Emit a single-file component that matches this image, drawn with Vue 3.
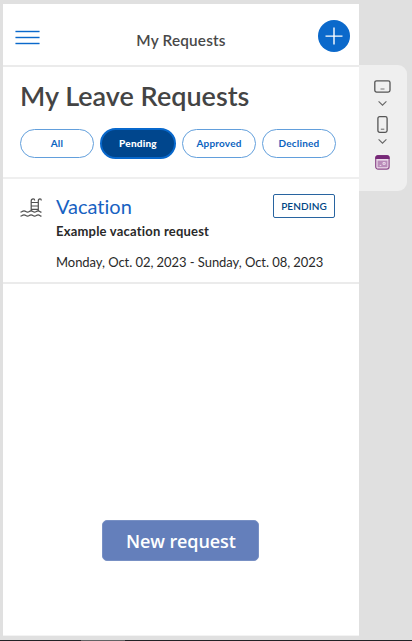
<script setup>
const filters = [
  { label: 'All' },
  { label: 'Pending', active: true },
  { label: 'Approved' },
  { label: 'Declined' },
]
</script>

<template>
  <div class="workspace">
    <main class="phone">
      <header class="topbar">
        <svg class="menu" width="25" height="16" viewBox="0 0 25 16">
          <path d="M.5 1.5h24M.5 7.5h24M.5 13.5h24" fill="none" stroke="#b9d5f1" stroke-width="2.4" />
          <path d="M.5 1.5h24M.5 7.5h24M.5 13.5h24" fill="none" stroke="#0b69cb" stroke-width="1" />
        </svg>
        <span class="screen-name">My Requests</span>
        <button class="add" aria-label="Add">
          <svg width="18" height="18" viewBox="0 0 18 18">
            <path d="M.5 9.1h17M9 .5v17" stroke="#fff" stroke-width="1.4" />
          </svg>
        </button>
      </header>

      <section class="intro">
        <h1>My Leave Requests</h1>
        <nav class="filters">
          <button v-for="f in filters" :key="f.label" class="pill" :class="{ active: f.active }">{{ f.label }}</button>
        </nav>
      </section>

      <article class="request">
        <svg class="pool" width="22" height="20" viewBox="0 0 22 20" fill="none" stroke="#505050" stroke-width="1.2">
          <path d="M11.2 13V3Q11.2.9 13.2.9 14.7.9 14.7 2.4M18.3 13V3Q18.3.9 20 .9 21.3.9 21.3 2.4M11.2 4.5h7M11.2 8h7M11.2 11.3h7" />
          <path d="M.5 14.2C2.2 14.2 2.2 12.8 4 12.8S5.9 14.2 7.6 14.2 9.3 12.8 11.1 12.8 12.9 14.2 14.6 14.2 16.4 12.8 18.1 12.8 19.8 14.2 21.5 14.2M.5 18.2C2.2 18.2 2.2 16.8 4 16.8S5.9 18.2 7.6 18.2 9.3 16.8 11.1 16.8 12.9 18.2 14.6 18.2 16.4 16.8 18.1 16.8 19.8 18.2 21.5 18.2" />
        </svg>
        <div class="details">
          <div class="heading">
            <h2>Vacation</h2>
            <span class="status">PENDING</span>
          </div>
          <p class="summary">Example vacation request</p>
          <p class="dates">Monday, Oct. 02, 2023 - Sunday, Oct. 08, 2023</p>
        </div>
      </article>

      <button class="new-request">New request</button>
    </main>

    <aside class="devices">
      <svg width="17" height="13" viewBox="0 0 17 13" fill="none">
        <rect x=".8" y=".8" width="15.2" height="11.3" rx="1.8" stroke="#555" stroke-width="1.3" />
        <path d="M6.5 9h4" stroke="#777" />
      </svg>
      <svg class="chevron" width="9" height="5" viewBox="0 0 9 5" fill="none">
        <path d="M.6.4 4.5 4.2 8.4.4" stroke="#666" stroke-width="1.1" />
      </svg>
      <svg class="handset" width="11" height="17" viewBox="0 0 11 17" fill="none">
        <rect x=".9" y=".7" width="9.2" height="15.6" rx="1.8" stroke="#555" stroke-width="1.3" />
        <path d="M3.8 13.2h3.5" stroke="#666" />
      </svg>
      <svg class="chevron" width="9" height="5" viewBox="0 0 9 5" fill="none">
        <path d="M.6.4 4.5 4.2 8.4.4" stroke="#666" stroke-width="1.1" />
      </svg>
      <svg class="app" width="15" height="15" viewBox="0 0 15 15" fill="none">
        <rect x=".7" y=".7" width="13.4" height="13.4" rx="2.4" fill="#ead9e9" stroke="#8d4b8b" stroke-width="1.2" />
        <path d="M.3 4V3Q.3.2 3 .2h9Q14.6.2 14.6 3v1Z" fill="#762877" />
        <path d="M2.6 5.6h9.8v6.6H2.6Z" fill="#b98bb9" />
        <path d="M8 7.6h2.2v1.7H8ZM4.7 10.4h1.6" stroke="#f0e2ef" stroke-width=".9" />
      </svg>
    </aside>
    <footer class="edge"><span></span></footer>
  </div>
</template>

<style>
body { margin: 0; background: #e0e0e0; }
</style>

<style scoped>
* { box-sizing: border-box; }
button { padding: 0; border: 0; }
h1, h2, p { margin: 0; }
svg { display: block; flex: none; }
.workspace {
  width: 412px;
  height: 641px;
  padding: 4px 0 0 3px;
  background: #e0e0e0;
  display: grid;
  grid-template-columns: 356px 48px;
  grid-template-rows: 632px 5px;
  align-items: start;
  font-family: Lato, sans-serif;
  font-variant-ligatures: none;
  overflow: hidden;
}
.phone {
  height: 632px;
  background: #fff;
  display: flex;
  flex-direction: column;
  border-bottom: 1px solid #f3f3f3;
}
.topbar {
  height: 63px;
  border-bottom: 2px solid #ebebeb;
  display: grid;
  grid-template-columns: 60px 1fr 60px;
  align-items: start;
}
.menu { margin: 26px 0 0 12px; }
.screen-name {
  margin-top: 26px;
  text-align: center;
  font-size: 15.3px;
  line-height: 20px;
  font-weight: 600;
  letter-spacing: .2px;
  color: #484848;
}
.add {
  width: 32px;
  height: 32px;
  margin: 16px 0 0 19px;
  border-radius: 50%;
  background: #0b69cb;
  display: flex;
  align-items: center;
  justify-content: center;
}
.intro {
  height: 112px;
  border-bottom: 2px solid #efefef;
  padding: 11px 0 0 17px;
}
h1 {
  font-size: 27px;
  line-height: 36px;
  font-weight: 600;
  color: #444;
  white-space: nowrap;
}
.filters {
  margin-top: 14px;
  display: flex;
  align-items: center;
  gap: 6px;
}
.pill {
  width: 74px;
  height: 29px;
  border: 1px solid #629fdc;
  border-radius: 15px;
  background: #fff;
  color: #0b63c0;
  font: 700 10px/12px Lato, sans-serif;
  letter-spacing: .2px;
  padding-bottom: 1px;
}
.pill.active {
  width: 76px;
  height: 31px;
  border: 2px solid #0868cc;
  border-radius: 16px;
  background: #00468d;
  color: #fff;
  font-weight: 900;
}
.request {
  height: 105px;
  border-bottom: 2px solid #ebebeb;
  padding: 15px 24px 0 17px;
  display: flex;
}
.pool { margin-top: 4px; }
.details { margin-left: 14px; flex: 1; white-space: nowrap; }
.heading { display: flex; justify-content: space-between; }
h2 {
  font-size: 20px;
  line-height: 24px;
  height: 26px;
  font-weight: 400;
  color: #1762c2;
}
.status {
  width: 62px;
  height: 24px;
  border: 1px solid #2864a0;
  border-radius: 2px;
  color: #004584;
  font-size: 10px;
  line-height: 23px;
  font-weight: 600;
  letter-spacing: .1px;
  text-align: center;
}
.summary { font-size: 13px; line-height: 18px; margin-top: 2px; font-weight: 700; letter-spacing: .21px; color: #292929; }
.dates { font-size: 13px; line-height: 18px; margin-top: 13px; letter-spacing: -.055px; color: #292929; }
.new-request {
  width: 157px;
  height: 41px;
  margin: 236px 0 0 99.4px;
  border: 1px solid #7890c4;
  border-radius: 5px;
  background: #647fbb;
  color: #fff;
  font: 600 18px/24px "Open Sans", sans-serif;
  letter-spacing: -.12px;
}
.devices {
  height: 126px;
  margin-top: 61px;
  padding: 15px 1px 0 0;
  background: #efefef;
  border-radius: 0 9px 9px 0;
  display: flex;
  flex-direction: column;
  align-items: center;
}
.chevron { margin-top: 8px; }
.handset { margin-top: 10px; }
.handset + .chevron { margin-top: 6px; }
.app { margin-top: 11px; }
.edge {
  grid-column: 1 / -1;
  width: 412px;
  height: 1px;
  margin: 4px 0 0 -3px;
  background: #222226;
}
.edge span { display: block; width: 44px; height: 1px; margin-left: 81px; background: #626264; }
</style>
